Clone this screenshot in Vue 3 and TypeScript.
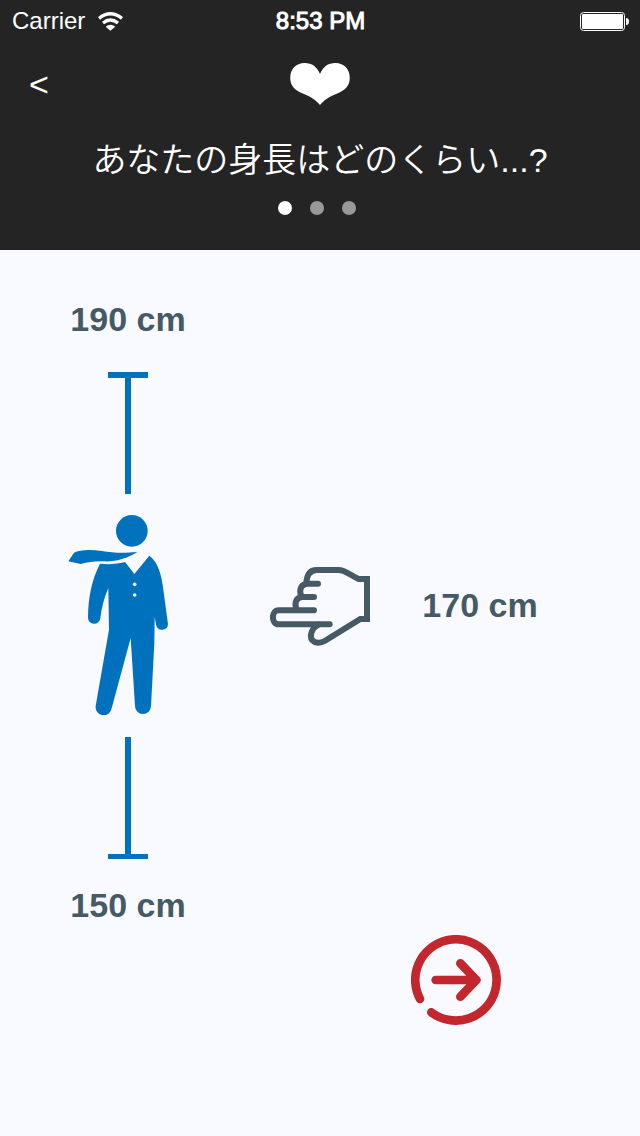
<script setup lang="ts">
import { ref } from 'vue'

const maxHeight = ref<number>(190)
const minHeight = ref<number>(150)
const height = ref<number>(170)
const steps: number[] = [1, 2, 3]
const step = ref<number>(1)

function next(): void {
  step.value = Math.min(step.value + 1, steps.length)
}

function back(): void {
  step.value = Math.max(step.value - 1, 1)
}
</script>

<template>
  <div class="screen">
    <header class="header">
      <div class="status">
        <div class="carrier">
          <span>Carrier</span>
          <svg class="wifi" viewBox="294 32 75 57" aria-hidden="true">
            <path d="M297 51 Q331 24 366 51" fill="none" stroke="#fff" stroke-width="10" />
            <path d="M309 65 Q331 47 354 65" fill="none" stroke="#fff" stroke-width="10" />
            <path d="M317 76 Q331 64 346 76 L331 88 Z" fill="#fff" />
          </svg>
        </div>
        <span class="clock">8:53 PM</span>
        <svg class="battery" viewBox="0 0 49 19" aria-hidden="true">
          <rect x="0.5" y="0.5" width="44" height="18" rx="3" fill="none" stroke="#fff" />
          <rect x="2" y="2" width="41" height="15" rx="1" fill="#fff" />
          <path d="M46 6 Q49 6 49 9.500 Q49 13 46 13 Z" fill="#fff" />
        </svg>
      </div>

      <nav class="nav">
        <button class="back" type="button" aria-label="戻る" @click="back">&lt;</button>
        <svg class="heart" viewBox="60 188 180 127" aria-hidden="true">
          <path
            d="M150 221 C159 200 174 188 196 188 C224 188 240 208 240 233 C240 257 226 270 202 280 C177 290 162 300 150 315 C138 300 123 290 98 280 C74 270 60 257 60 233 C60 208 76 188 104 188 C126 188 141 200 150 221 Z"
            fill="#fff"
          />
        </svg>
      </nav>

      <h1 class="title">あなたの身長はどのくらい...?</h1>

      <div class="dots">
        <span v-for="n in steps" :key="n" class="dot" :class="{ active: n === step }"></span>
      </div>
    </header>

    <main class="picker">
      <section class="scale">
        <span class="label">{{ maxHeight }} cm</span>
        <div class="ruler upper"></div>
        <svg class="person" viewBox="24 45 300 600" aria-hidden="true">
          <g fill="#0071bc">
            <circle cx="215.5" cy="92.500" r="47.500" />
            <path
              d="M25 184 L42 158 C60 148 95 148 125 153 C165 160 195 159 232 156 C205 174 165 186 132 184 C105 183 85 186 62 192 Z"
            />
            <path
              d="M120 191 C148 194 170 192 195 186 L223 222 L268 167 C288 182 301 208 308 255 L324 372 A18 18 0 0 1 289 377 L284 352 L283 430 L273 618 A24 24 0 0 1 225 618 L212 414 L155 625 A24 24 0 0 1 107 618 L147 389 L145 264 Q127 305 121 354 A18.500 18.500 0 0 1 84 352 C85 290 95 240 120 191 Z"
            />
          </g>
          <circle cx="224" cy="253" r="5.500" fill="#f8faff" />
          <circle cx="224" cy="285" r="5.500" fill="#f8faff" />
        </svg>
        <div class="ruler lower"></div>
        <span class="label">{{ minHeight }} cm</span>
      </section>

      <svg class="hand" viewBox="30 33 300 240" aria-hidden="true">
        <g fill="none" stroke="#455a64" stroke-width="18" stroke-linecap="round" stroke-linejoin="miter">
          <path
            d="M174 86 H139 C140 58 150 45 170 45 H235 C256 45 270 60 296 72 H321 V192 H301 L194 258 C180 266 164 264 157 256 C147 244 156 217 175 209"
          />
          <path d="M209 208 H56 C33 208 33 166 56 166 H162" />
          <path d="M162 126 H124 C106 130 104 145 109 163" />
          <path d="M137 87 C121 91 117 107 124 124" />
        </g>
      </svg>

      <output class="label value">{{ height }} cm</output>

      <button class="next" type="button" aria-label="次へ" @click="next">
        <svg viewBox="32 30 270 270" aria-hidden="true">
          <g fill="none" stroke="#c1272d" stroke-width="26" stroke-linecap="round" stroke-linejoin="round">
            <path d="M59 222 A122 122 0 1 1 93 262" />
            <path d="M106 165 H226 M180 115 L228 165 L180 215" />
          </g>
        </svg>
      </button>
    </main>
  </div>
</template>

<style>
body {
  background: #f8faff;
}
</style>

<style scoped>
.screen {
  min-height: 100vh;
  background: #f8faff;
  font-family: "Liberation Sans", "Noto Sans CJK JP", sans-serif;
}

.header {
  padding-bottom: 35px;
  background: #242424;
  color: #fff;
}

.status {
  display: grid;
  grid-template-columns: 1fr auto 1fr;
  align-items: center;
  padding: 1px 11px 0 12px;
  font-size: 24px;
  line-height: 40px;
}

.carrier {
  display: flex;
  align-items: center;
  gap: 13px;
}

.wifi {
  width: 25px;
  height: 19px;
}

.clock {
  font-weight: 400;
  -webkit-text-stroke: 1px #fff;
}

.battery {
  justify-self: end;
  width: 49px;
  height: 19px;
}

.nav {
  display: grid;
  grid-template-columns: 1fr auto 1fr;
  align-items: center;
  height: 86px;
  padding: 0 29px;
}

.back {
  justify-self: start;
  padding: 0;
  border: 0;
  background: none;
  color: #fff;
  font: inherit;
  font-size: 34px;
  line-height: 36px;
  cursor: pointer;
}

.heart {
  width: 60px;
  height: 42px;
}

.title {
  margin: 13px 0 21px;
  font-size: 34px;
  font-weight: 350;
  line-height: 40px;
  text-align: center;
}

.dots {
  display: flex;
  justify-content: center;
  gap: 18px;
  padding-right: 6px;
}

.dot {
  width: 14px;
  height: 14px;
  border-radius: 50%;
  background: #999;
}

.dot.active {
  background: #fff;
}

.picker {
  display: grid;
  grid-template-columns: 40% 20% 30%;
  align-items: center;
  padding-top: 49px;
}

.scale {
  display: flex;
  flex-direction: column;
  align-items: center;
}

.label {
  color: #455a64;
  font-size: 34px;
  font-weight: 700;
  line-height: 40px;
  text-align: center;
}

.ruler {
  box-sizing: border-box;
  width: 40px;
  height: 122px;
  background: linear-gradient(#0071bc, #0071bc) center / 6px 100% no-repeat;
}

.upper {
  margin: 33px 0 21px;
  border-top: 6px solid #0071bc;
}

.lower {
  margin: 22px 0 26px;
  border-bottom: 5px solid #0071bc;
}

.person {
  width: 100px;
  height: 200px;
  margin-right: 20px;
}

.hand {
  justify-self: center;
  width: 100px;
  height: 80px;
  margin-bottom: 12px;
}

.value {
  margin-bottom: 14px;
}

.next {
  grid-column: 3;
  width: 90px;
  height: 90px;
  margin: 10px 0 0 27px;
  padding: 0;
  border: 0;
  background: none;
  cursor: pointer;
}

.next svg {
  display: block;
  width: 100%;
  height: 100%;
}
</style>
